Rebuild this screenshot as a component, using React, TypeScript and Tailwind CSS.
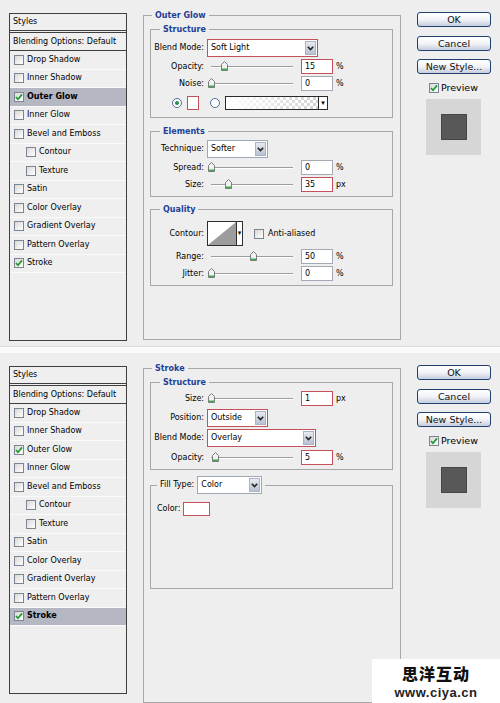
import type { ReactNode } from 'react'

type StyleItem = { label: string; indent?: boolean }

const styleItems: StyleItem[] = [
  { label: 'Drop Shadow' },
  { label: 'Inner Shadow' },
  { label: 'Outer Glow' },
  { label: 'Inner Glow' },
  { label: 'Bevel and Emboss' },
  { label: 'Contour', indent: true },
  { label: 'Texture', indent: true },
  { label: 'Satin' },
  { label: 'Color Overlay' },
  { label: 'Gradient Overlay' },
  { label: 'Pattern Overlay' },
  { label: 'Stroke' },
]

const checkedStyles = ['Outer Glow', 'Stroke']

function CheckBox({ checked }: { checked?: boolean }) {
  return (
    <span className="flex h-[10px] w-[10px] shrink-0 items-center justify-center border border-[#7d8491] bg-gradient-to-br from-[#d9d9d9] to-white">
      {checked && (
        <svg width="8" height="8" viewBox="0 0 8 8">
          <path d="M1 4 L3 6.3 L7 1.4" fill="none" stroke="#1c9a2c" strokeWidth="1.7" />
        </svg>
      )}
    </span>
  )
}

function StylesList({ active }: { active: string }) {
  return (
    <div className="h-[328px] w-[118px] border border-[#3f3f3f] bg-[#efefef]">
      <div className="flex h-[17px] items-center border-b border-[#3f3f3f] pl-[3px]">Styles</div>
      <div className="h-[1px] bg-[#efefef]" />
      <div className="flex h-[19px] items-center border-y border-[#3f3f3f] pl-[3px]">Blending Options: Default</div>
      {styleItems.map((item) => {
        const isActive = item.label === active
        return (
          <div
            key={item.label}
            className={
              'flex h-[18.5px] items-center gap-[3px] border-b border-[#fafafa] ' +
              (item.indent ? 'pl-[16px] ' : 'pl-[4px] ') +
              (isActive ? 'bg-[#b5b7c3] font-bold' : '')
            }
          >
            <CheckBox checked={checkedStyles.includes(item.label)} />
            <span>{item.label}</span>
          </div>
        )
      })}
    </div>
  )
}

function Group({
  title,
  legendClass,
  className,
  children,
}: {
  title: ReactNode
  legendClass: string
  className?: string
  children: ReactNode
}) {
  return (
    <fieldset className={'border border-[#a7a7a7] ' + (className ?? '')}>
      <legend className={'px-[3px] leading-[10px] font-bold text-[#1d3f96] ' + legendClass}>
        <span className="relative top-[1px]">{title}</span>
      </legend>
      {children}
    </fieldset>
  )
}

function Row({ label, className, children }: { label: string; className: string; children: ReactNode }) {
  return (
    <div className={'flex items-center ' + className}>
      <span className="w-[53px] shrink-0 text-right">{label}</span>
      <div className="ml-[3px] flex items-center">{children}</div>
    </div>
  )
}

function Chevron() {
  return (
    <svg width="7" height="5" viewBox="0 0 7 5">
      <path d="M0.8 0.8 L3.5 3.6 L6.2 0.8" fill="none" stroke="#222" strokeWidth="1.6" />
    </svg>
  )
}

function Select({ value, red, width }: { value: string; red?: boolean; width: string }) {
  return (
    <div
      className={
        'flex h-full items-stretch border bg-white ' +
        (red ? 'border-[#c4505a] ' : 'border-[#9ea7b6] ') +
        width
      }
    >
      <span className="flex flex-1 items-center pl-[3px]">{value}</span>
      <span className="m-[1px] flex w-[11px] items-center justify-center border border-[#aab2c4] bg-gradient-to-b from-[#e8ebf2] to-[#b8c0d2]">
        <Chevron />
      </span>
    </div>
  )
}

function Field({ value, red }: { value: string; red?: boolean }) {
  return (
    <div
      className={
        'ml-[4px] flex h-full w-[32px] items-center border bg-white pl-[3px] ' +
        (red ? 'border-[#c4505a]' : 'border-[#a3aab6]')
      }
    >
      {value}
    </div>
  )
}

function Thumb() {
  return (
    <svg width="7" height="10" viewBox="0 0 7 10">
      <path d="M0.5 3.5 L3.5 0.5 L6.5 3.5 V9.5 H0.5 Z" fill="#f1f1f1" stroke="#7b7b7b" />
      <rect x="1" y="7.5" width="5" height="1.6" fill="#39b04a" />
    </svg>
  )
}

function Slider({ at }: { at: number }) {
  return (
    <div className="relative flex h-full w-[90px] items-center">
      <div className="mx-[4px] h-[2px] w-full border-t border-b border-t-[#9d9d9d] border-b-white" />
      <div className="absolute top-[2px] flex" style={{ left: 4 + at - 3.5 }}>
        <Thumb />
      </div>
    </div>
  )
}

function SliderRow({
  label,
  at,
  value,
  unit,
  red,
  className,
}: {
  label: string
  at: number
  value: string
  unit: string
  red?: boolean
  className: string
}) {
  return (
    <Row label={label} className={className}>
      <div className="flex h-[15px] items-center">
        <Slider at={at} />
        <Field value={value} red={red} />
        <span className="ml-[3px]">{unit}</span>
      </div>
    </Row>
  )
}

function Radio({ on }: { on?: boolean }) {
  return (
    <span className="flex h-[10px] w-[10px] shrink-0 items-center justify-center rounded-full border border-[#51709a] bg-white">
      {on && <span className="h-[4px] w-[4px] rounded-full bg-[#2a8a4e]" />}
    </span>
  )
}

function RightColumn() {
  return (
    <div className="flex w-[74px] flex-col pt-[12px]">
      {['OK', 'Cancel', 'New Style...'].map((t, i) => (
        <button
          key={t}
          className={
            'flex h-[15px] w-[74px] items-center justify-center rounded-[3px] border border-[#22406f] bg-gradient-to-b from-white via-[#f1f3f7] to-[#c6cede] text-[9.5px] leading-none text-[#111] ' +
            (i === 0 ? '' : i === 1 ? 'mt-[9px]' : 'mt-[8px]')
          }
        >
          {t}
        </button>
      ))}
      <div className="mt-[8px] flex h-[12px] items-center gap-[2px] pl-[12px] text-[9.5px]">
        <CheckBox checked />
        <span>Preview</span>
      </div>
      <div className="ml-[9px] mt-[5px] flex h-[56px] w-[55px] items-center justify-center bg-[#d6d6d6]">
        <div className="h-[26px] w-[26px] border border-[#464646] bg-[#585858]" />
      </div>
    </div>
  )
}

function OuterGlowDialog() {
  return (
    <div className="flex h-[346px]">
      <div className="mr-[16px] pl-[9px] pt-[13px]">
        <StylesList active="Outer Glow" />
      </div>
      <div className="mr-[16px] w-[258px] pt-[10px]">
        <Group title="Outer Glow" legendClass="ml-[8px]" className="h-[330px]">
          <div className="pl-[6px] pr-[7px] pt-[4px]">
            <Group title="Structure" legendClass="ml-[9px]">
              <div className="pb-[7px] pt-[5px]">
                <Row label="Blend Mode:" className="h-[18px]">
                  <div className="flex h-[18px]">
                    <Select value="Soft Light" red width="w-[111px]" />
                  </div>
                </Row>
                <SliderRow label="Opacity:" at={13} value="15" unit="%" red className="mt-[2px] h-[15px]" />
                <SliderRow label="Noise:" at={0} value="0" unit="%" className="mt-[2px] h-[15px]" />
                <div className="mt-[5px] flex h-[14px] items-center pl-[21px]">
                  <Radio on />
                  <span className="ml-[5px] h-[14px] w-[12px] border border-[#c4505a] bg-white" />
                  <span className="ml-[11px]">
                    <Radio />
                  </span>
                  <div className="ml-[5px] flex h-[14px] w-[103px] border border-[#2a2a2a]">
                    <div className="flex-1 bg-[linear-gradient(to_right,#ffffff,rgba(255,255,255,0)),repeating-conic-gradient(#d2d2d2_0_25%,#ffffff_0_50%)] [background-size:100%_100%,6px_6px]" />
                    <div className="flex w-[9px] items-center justify-center border-l border-[#2a2a2a] bg-white text-[7px] leading-none">
                      ▾
                    </div>
                  </div>
                </div>
              </div>
            </Group>
            <Group title="Elements" legendClass="ml-[9px]" className="mt-[8px]">
              <div className="pb-[4px] pt-[4px]">
                <Row label="Technique:" className="h-[18px]">
                  <div className="flex h-[18px]">
                    <Select value="Softer" width="w-[61px]" />
                  </div>
                </Row>
                <SliderRow label="Spread:" at={0} value="0" unit="%" className="mt-[2px] h-[15px]" />
                <SliderRow label="Size:" at={17} value="35" unit="px" red className="mt-[2px] h-[15px]" />
              </div>
            </Group>
            <Group title="Quality" legendClass="ml-[9px]" className="mt-[7px]">
              <div className="pb-[4px] pt-[7px]">
                <Row label="Contour:" className="h-[25px]">
                  <div className="flex h-[25px] w-[36px] border border-[#2e2e2e] bg-white">
                    <svg width="28" height="23" viewBox="0 0 28 23" className="block">
                      <polygon points="0,23 28,0 28,23" fill="#9c9c9c" />
                    </svg>
                    <div className="flex flex-1 items-center justify-center border-l border-[#2e2e2e] text-[7px] leading-none">
                      ▾
                    </div>
                  </div>
                  <div className="ml-[11px] flex items-center gap-[4px]">
                    <CheckBox />
                    <span>Anti-aliased</span>
                  </div>
                </Row>
                <SliderRow label="Range:" at={42} value="50" unit="%" className="mt-[3px] h-[15px]" />
                <SliderRow label="Jitter:" at={0} value="0" unit="%" className="mt-[2px] h-[15px]" />
              </div>
            </Group>
          </div>
        </Group>
      </div>
      <RightColumn />
    </div>
  )
}

function StrokeDialog() {
  return (
    <div className="flex h-[350px]">
      <div className="mr-[16px] pl-[9px] pt-[13px]">
        <StylesList active="Stroke" />
      </div>
      <div className="mr-[16px] w-[258px] pt-[10px]">
        <Group title="Stroke" legendClass="ml-[8px]" className="h-[340px]">
          <div className="pl-[6px] pr-[7px] pt-[4px]">
            <Group title="Structure" legendClass="ml-[9px]">
              <div className="pb-[4px] pt-[4px]">
                <SliderRow label="Size:" at={0.5} value="1" unit="px" red className="h-[15px]" />
                <Row label="Position:" className="mt-[3px] h-[18px]">
                  <div className="flex h-[18px]">
                    <Select value="Outside" red width="w-[61px]" />
                  </div>
                </Row>
                <Row label="Blend Mode:" className="mt-[2px] h-[18px]">
                  <div className="flex h-[18px]">
                    <Select value="Overlay" red width="w-[109px]" />
                  </div>
                </Row>
                <SliderRow label="Opacity:" at={4.5} value="5" unit="%" red className="mt-[3px] h-[15px]" />
              </div>
            </Group>
            <fieldset className="mt-[6px] h-[113px] border border-[#a7a7a7]">
              <legend className="ml-[6px] flex h-[18px] items-center gap-[3px] px-[3px]">
                <span>Fill Type:</span>
                <div className="flex h-[18px]">
                  <Select value="Color" width="w-[65px]" />
                </div>
              </legend>
              <div className="mt-[8px] flex h-[14px] items-center pl-[6px]">
                <span>Color:</span>
                <span className="ml-[3px] h-[14px] w-[27px] border border-[#c4505a] bg-white" />
              </div>
            </fieldset>
          </div>
        </Group>
      </div>
      <RightColumn />
    </div>
  )
}

export default function App() {
  return (
    <div className="relative h-[703px] w-[500px] overflow-hidden bg-[#eeeeee] font-['DejaVu_Sans',sans-serif] text-[8px] leading-[10px] text-black">
      <OuterGlowDialog />
      <div className="h-[7px] border-t border-[#dcdcdc] bg-[#fafafa]" />
      <StrokeDialog />
      <div className="absolute bottom-0 right-0 flex h-[44px] w-[128px] flex-col items-center justify-center bg-white">
        <span className="font-['Noto_Sans_CJK_SC',sans-serif] text-[16px] leading-[23px] font-black tracking-[1px] text-[#111]">
          思洋互动
        </span>
        <span className="font-['Liberation_Sans',sans-serif] text-[13px] leading-[15px] font-bold tracking-[0.5px] text-[#222]">
          www.ciya.cn
        </span>
      </div>
    </div>
  )
}
